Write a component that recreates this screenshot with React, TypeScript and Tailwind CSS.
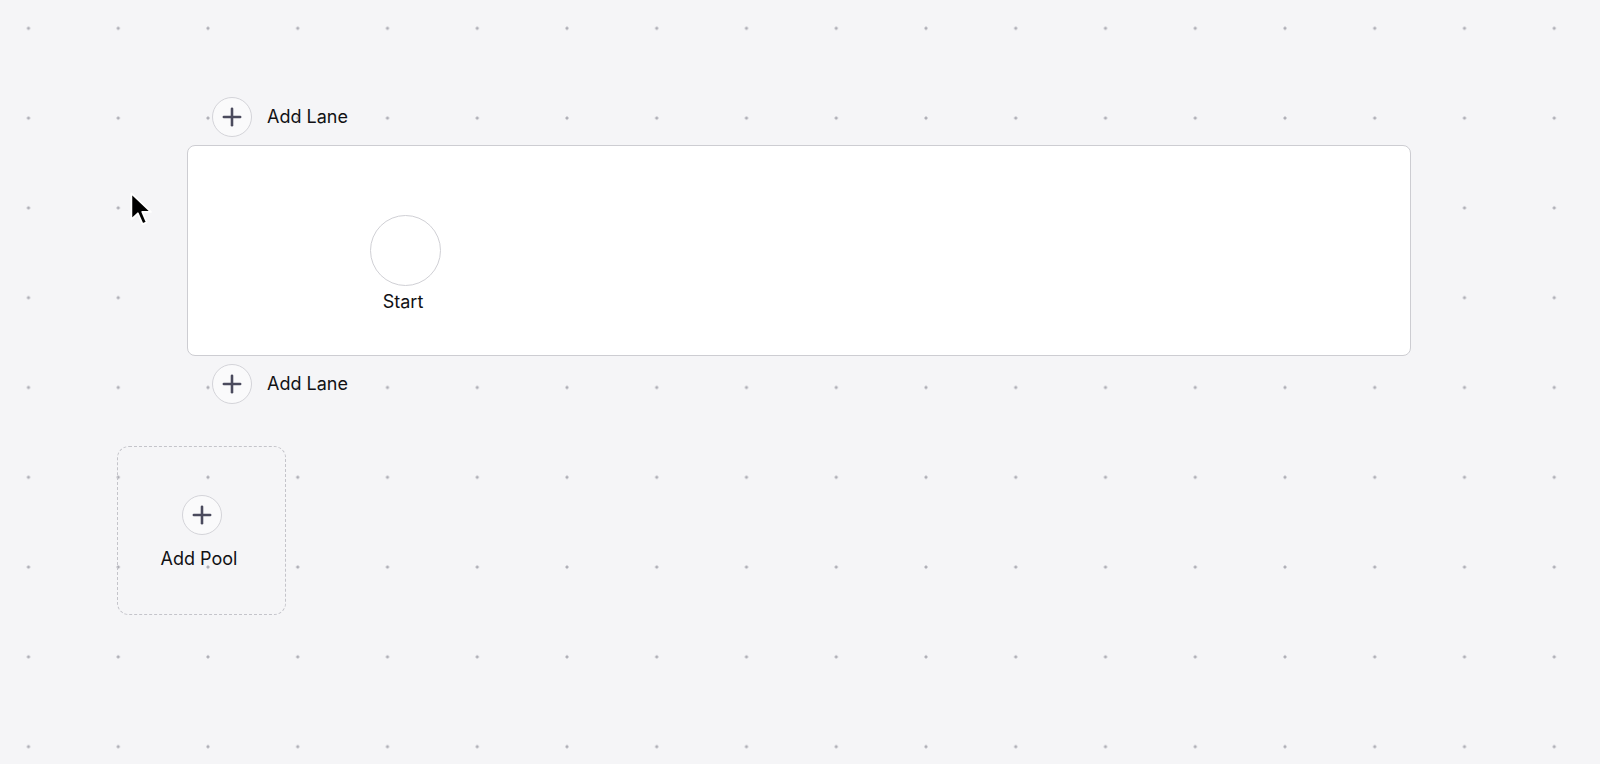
import { Plus } from 'lucide-react';

function AddButton({ label }: { label: string }) {
  return (
    <div className="flex items-center gap-[15px] pl-[25px]">
      <button className="w-10 h-10 rounded-full border border-[#d4d4d9] bg-[#fafafb] flex items-center justify-center">
        <Plus className="w-7 h-7 text-[#4a4a5d]" strokeWidth={2.2} />
      </button>
      <span className="text-[18px] leading-5 text-[#111114]">{label}</span>
    </div>
  );
}

function Cursor() {
  return (
    <svg
      className="absolute left-[129px] top-[191px]"
      width="26"
      height="38"
      viewBox="0 0 22 32"
    >
      <path
        d="M2 2 L2 24 L7.5 18.8 L11.5 28 L15 26.5 L11.2 17.6 L18.5 17.6 Z"
        fill="#000"
        stroke="#fff"
        strokeWidth="1.5"
        strokeLinejoin="round"
      />
    </svg>
  );
}

export default function App() {
  return (
    <div
      className="relative w-full h-[764px] overflow-hidden bg-[#f5f5f7] bg-[radial-gradient(circle,#aeaeb6_1.2px,transparent_1.9px)] bg-[size:89.75px_89.8px] bg-[position:-16.4px_-16.6px]"
      style={{ fontFamily: 'Inter, "Noto Sans", sans-serif' }}
    >
      <div className="flex flex-col pt-[97px] pl-[117px]">
        <div className="flex flex-col gap-2 ml-[70px]">
          <AddButton label="Add Lane" />
          <div className="w-[1224px] h-[211px] rounded-lg border border-[#cdcdd2] bg-white pl-[182px] pt-[69px]">
            <div className="flex flex-col items-center w-[71px]">
              <div className="w-[71px] h-[71px] rounded-full border border-[#d0d0d5] bg-white" />
              <span className="mt-[6px] mr-[5px] text-[18px] leading-5 text-[#111114]">Start</span>
            </div>
          </div>
          <AddButton label="Add Lane" />
        </div>

        <div className="mt-[42px] w-[169px] h-[169px] rounded-xl border border-dashed border-[#c4c4ca] flex flex-col items-center pt-[48px]">
          <button className="w-10 h-10 rounded-full border border-[#d4d4d9] bg-[#fafafb] flex items-center justify-center">
            <Plus className="w-7 h-7 text-[#4a4a5d]" strokeWidth={2.2} />
          </button>
          <span className="mt-[14px] mr-[5px] text-[18px] leading-5 text-[#111114]">Add Pool</span>
        </div>
      </div>

      <Cursor />
    </div>
  );
}
